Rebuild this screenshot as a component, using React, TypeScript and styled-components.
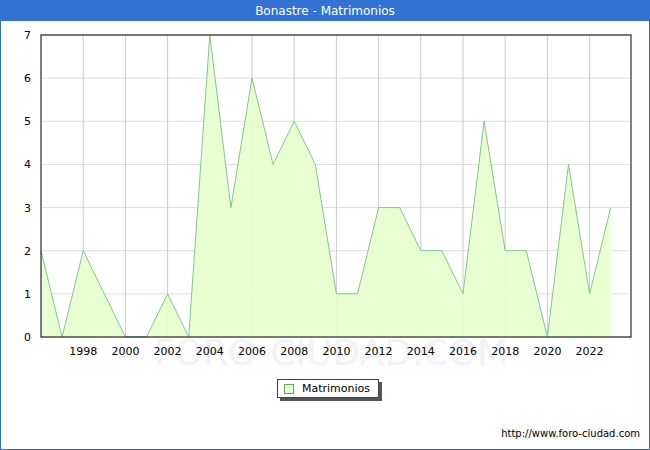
import React from 'react';
import styled, { createGlobalStyle } from 'styled-components';

const GlobalStyle = createGlobalStyle`
  html, body { margin: 0; padding: 0; background: #fff; }
  body { font-family: "DejaVu Sans", Verdana, sans-serif; }
`;

const Frame = styled.div`
  width: 650px;
  height: 450px;
  box-sizing: border-box;
  border: 1px solid #3070d0;
  border-top: none;
  display: flex;
  flex-direction: column;
  position: relative;
`;

const TitleBar = styled.div`
  height: 21px;
  margin: 0 -1px;
  background: #3272d4;
  color: #fff;
  font-size: 12px;
  display: flex;
  align-items: center;
  justify-content: center;
`;

const Chart = styled.svg`
  display: block;
`;

const Legend = styled.div`
  align-self: flex-start;
  margin: 6px 0 0 276px;
  display: flex;
  align-items: center;
  gap: 8px;
  padding: 2px 8px 2px 6px;
  border: 1px solid #444;
  box-shadow: 3px 3px 0 #555;
  font-size: 11px;
  color: #000;
`;

const Swatch = styled.span`
  width: 8px;
  height: 8px;
  background: #e6ffcc;
  border: 1px solid #6a6;
`;

const Credit = styled.div`
  position: absolute;
  right: 9px;
  bottom: 10px;
  font-size: 10px;
  color: #000;
`;

const data = [2, 0, 2, 1, 0, 0, 1, 0, 7, 3, 6, 4, 5, 4, 1, 1, 3, 3, 2, 2, 1, 5, 2, 2, 0, 4, 1, 3];
const X0 = 40, X1 = 630, Y0 = 14, Y1 = 316;
const step = 21.1;
const unit = (Y1 - Y0) / 7;
const px = (i: number) => X0 + i * step;
const py = (v: number) => Y1 - v * unit;

export default function App() {
  const line = data.map((v, i) => `${px(i)},${py(v)}`).join(' ');
  const area = `${px(0)},${Y1} ${line} ${px(data.length - 1)},${Y1}`;
  return (
    <>
      <GlobalStyle />
      <Frame>
        <TitleBar>Bonastre - Matrimonios</TitleBar>
        <Chart width={648} height={352}>
          <text x={330} y={344} textAnchor="middle" fontSize={36} fill="#f2f2f8" fontFamily="DejaVu Sans">FORO-CIUDAD.COM</text>
          {Array.from({ length: 8 }, (_, v) => (
            <g key={v}>
              <line x1={X0} x2={X1} y1={py(v)} y2={py(v)} stroke="#ddd" />
              <text x={30} y={py(v) + 4} fontSize={11} textAnchor="end">{v}</text>
            </g>
          ))}
          {Array.from({ length: 13 }, (_, k) => {
            const i = 2 + k * 2;
            return (
              <g key={i}>
                <line x1={px(i)} x2={px(i)} y1={Y0} y2={Y1} stroke="#ccc" />
                <text x={px(i)} y={Y1 + 18} fontSize={11} textAnchor="middle">{1996 + i}</text>
              </g>
            );
          })}
          <polygon points={area} fill="#e6ffcc" fillOpacity={0.9} />
          <polyline points={line} fill="none" stroke="#80c890" strokeWidth={1} />
          <rect x={X0} y={Y0} width={X1 - X0} height={Y1 - Y0} fill="none" stroke="#000" />
        </Chart>
        <Legend><Swatch />Matrimonios</Legend>
        <Credit>http://www.foro-ciudad.com</Credit>
      </Frame>
    </>
  );
}
